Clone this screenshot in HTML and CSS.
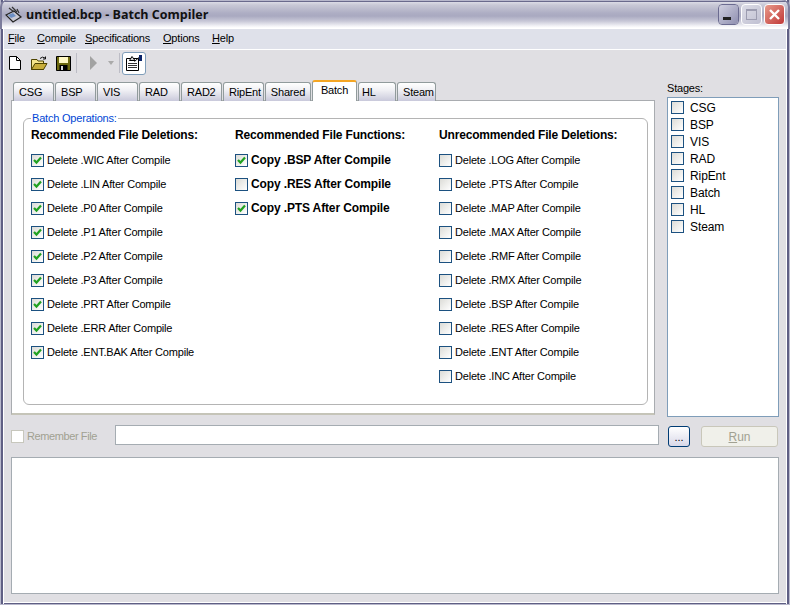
FILE: index.html
```html
<!DOCTYPE html>
<html lang="en">
<head>
  <meta charset="UTF-8">
  <title>untitled.bcp - Batch Compiler</title>
  <link rel="stylesheet" href="styles.css">
</head>
<body>
  <svg class="defs" width="0" height="0">
    <symbol id="check" viewBox="0 0 11 11">
      <path d="M2 5 L4.5 7.6 L9 2.6" fill="none" stroke="#21a121" stroke-width="2.2"/>
    </symbol>
  </svg>

  <div class="window">
    <header class="titlebar">
      <svg class="app-icon" width="18" height="18" viewBox="0 0 18 18">
        <path d="M1 9 L9 5 L16 11 L8 16 Z" fill="#c9c9d4" stroke="#222" stroke-width="1.2"/>
        <path d="M3 9 L8 7 L11 10 L6 12 Z" fill="#6d8fc4"/>
        <path d="M4 2 L9 6 M7 1 L12 6 M12 3 L14 7" stroke="#333" stroke-width="1.2" fill="none"/>
      </svg>
      <h1 class="title">untitled.bcp - Batch Compiler</h1>
      <div class="caption-buttons">
        <span class="cap-btn cap-min"><i></i></span>
        <span class="cap-btn cap-max"><i></i></span>
        <span class="cap-btn cap-close">
          <svg width="13" height="13" viewBox="0 0 13 13"><path d="M2 2 L11 11 M11 2 L2 11" stroke="#fff" stroke-width="2.4"/></svg>
        </span>
      </div>
    </header>

    <nav class="menubar">
      <a><u>F</u>ile</a>
      <a><u>C</u>ompile</a>
      <a><u>S</u>pecifications</a>
      <a><u>O</u>ptions</a>
      <a><u>H</u>elp</a>
    </nav>

    <div class="toolbar">
      <svg class="tool" width="12" height="14" viewBox="0 0 12 14">
        <path d="M0.5 0.5 H7.5 L11.5 4.5 V13.5 H0.5 Z" fill="#fff" stroke="#000"/>
        <path d="M7.5 0.5 V4.5 H11.5" fill="none" stroke="#000"/>
      </svg>
      <svg class="tool tool-open" width="17" height="14" viewBox="0 0 17 14">
        <path d="M0.5 3.5 H6 L7 5 H12.5 V13.5 H0.5 Z" fill="#f4e58c" stroke="#4d4300"/>
        <path d="M0.5 13.5 L4 7.5 H16 L12.5 13.5 Z" fill="#c8ae3c" stroke="#4d4300"/>
        <path d="M9 2.5 Q11.5 0 14 2 M14.5 0.5 V3 H12" fill="none" stroke="#111"/>
      </svg>
      <svg class="tool" width="15" height="15" viewBox="0 0 15 15">
        <path d="M0.5 0.5 H14.5 V14.5 H0.5 Z" fill="#6e6a10" stroke="#000"/>
        <rect x="3" y="1" width="9" height="6" fill="#fff8c4"/>
        <rect x="3.5" y="9" width="8" height="5.5" fill="#000"/>
        <rect x="5" y="10" width="2" height="4" fill="#d8d8d8"/>
      </svg>
      <span class="tool-sep"></span>
      <svg class="tool-play" width="7" height="14" viewBox="0 0 7 14"><path d="M0 0 L7 7 L0 14 Z" fill="#a2a2a2"/></svg>
      <svg class="tool-drop" width="6" height="4" viewBox="0 0 6 4"><path d="M0 0 H6 L3 4 Z" fill="#aaa"/></svg>
      <span class="tool-sep tool-sep-2"></span>
      <span class="tool-btn">
        <svg width="18" height="18" viewBox="0 0 18 18">
          <path d="M1.5 4.5 H13.5 V16.5 H1.5 Z" fill="#fff" stroke="#000"/>
          <path d="M4.5 6.5 L7 2.5 L10 6.5 Z" fill="#d8d8d8" stroke="#000"/>
          <path d="M3 9.5 H12 M3 11.5 H12 M3 13.5 H12" stroke="#333"/>
          <rect x="14" y="1" width="3" height="6" fill="#0a246a"/>
          <path d="M9.5 7.5 L14 3.5" stroke="#000"/>
        </svg>
      </span>
    </div>

    <main class="workspace">
      <div class="compile-pane">
        <div class="tabs">
          <span class="tab">CSG</span>
          <span class="tab">BSP</span>
          <span class="tab">VIS</span>
          <span class="tab">RAD</span>
          <span class="tab">RAD2</span>
          <span class="tab">RipEnt</span>
          <span class="tab tab-center">Shared</span>
          <span class="tab tab-center tab-active">Batch</span>
          <span class="tab tab-hl">HL</span>
          <span class="tab">Steam</span>
        </div>
        <section class="tab-page">
          <fieldset class="group">
            <legend>Batch Operations:</legend>
            <div class="group-cols">
              <div class="col">
                <h2>Recommended File Deletions:</h2>
                <label class="row"><span class="box"><svg><use href="#check"/></svg></span>Delete .WIC After Compile</label>
                <label class="row"><span class="box"><svg><use href="#check"/></svg></span>Delete .LIN After Compile</label>
                <label class="row"><span class="box"><svg><use href="#check"/></svg></span>Delete .P0 After Compile</label>
                <label class="row"><span class="box"><svg><use href="#check"/></svg></span>Delete .P1 After Compile</label>
                <label class="row"><span class="box"><svg><use href="#check"/></svg></span>Delete .P2 After Compile</label>
                <label class="row"><span class="box"><svg><use href="#check"/></svg></span>Delete .P3 After Compile</label>
                <label class="row"><span class="box"><svg><use href="#check"/></svg></span>Delete .PRT After Compile</label>
                <label class="row"><span class="box"><svg><use href="#check"/></svg></span>Delete .ERR After Compile</label>
                <label class="row"><span class="box"><svg><use href="#check"/></svg></span>Delete .ENT.BAK After Compile</label>
              </div>
              <div class="col col-bold">
                <h2>Recommended File Functions:</h2>
                <label class="row"><span class="box"><svg><use href="#check"/></svg></span>Copy .BSP After Compile</label>
                <label class="row"><span class="box"></span>Copy .RES After Compile</label>
                <label class="row"><span class="box"><svg><use href="#check"/></svg></span>Copy .PTS After Compile</label>
              </div>
              <div class="col">
                <h2>Unrecommended File Deletions:</h2>
                <label class="row"><span class="box"></span>Delete .LOG After Compile</label>
                <label class="row"><span class="box"></span>Delete .PTS After Compile</label>
                <label class="row"><span class="box"></span>Delete .MAP After Compile</label>
                <label class="row"><span class="box"></span>Delete .MAX After Compile</label>
                <label class="row"><span class="box"></span>Delete .RMF After Compile</label>
                <label class="row"><span class="box"></span>Delete .RMX After Compile</label>
                <label class="row"><span class="box"></span>Delete .BSP After Compile</label>
                <label class="row"><span class="box"></span>Delete .RES After Compile</label>
                <label class="row"><span class="box"></span>Delete .ENT After Compile</label>
                <label class="row"><span class="box"></span>Delete .INC After Compile</label>
              </div>
            </div>
          </fieldset>
        </section>
      </div>

      <aside class="stages">
        <div class="stages-label">Stages:</div>
        <ul class="stage-list">
          <li><span class="box"></span>CSG</li>
          <li><span class="box"></span>BSP</li>
          <li><span class="box"></span>VIS</li>
          <li><span class="box"></span>RAD</li>
          <li><span class="box"></span>RipEnt</li>
          <li><span class="box"></span>Batch</li>
          <li><span class="box"></span>HL</li>
          <li><span class="box"></span>Steam</li>
        </ul>
      </aside>
    </main>

    <div class="file-row">
      <label class="remember"><span class="box box-off"></span>Remember File</label>
      <input class="file-input" type="text">
      <button class="browse">...</button>
      <button class="run" disabled><u>R</u>un</button>
    </div>

    <textarea class="log"></textarea>
  </div>
</body>
</html>
```

FILE: styles.css
```css
html, body {
  margin: 0;
  padding: 0;
  height: 605px;
  overflow: hidden;
}

body {
  font-family: 'Liberation Sans', Arial, sans-serif;
  font-size: 11px;
  letter-spacing: -0.2px;
  color: #000;
  background-color: #e0dfe3;
}

.defs {
  display: block;
  height: 0;
}

.window {
  box-sizing: border-box;
  width: 790px;
  height: 605px;
  display: flex;
  flex-direction: column;
  background-color: #e0dfe3;
  border: 1px solid #b8b8cc;
  border-top: 0;
  box-shadow: inset 1px 0 #5f5f84, inset 2px 0 #5f5f84, inset 3px 0 #fff, inset -1px 0 #5f5f84, inset -2px 0 #5f5f84, inset -3px 0 #fff, inset 0 -1px #5f5f84, inset 0 -2px #fff;
}

/* title bar */
.titlebar {
  height: 29px;
  flex: none;
  margin: 0 -1px;
  display: flex;
  align-items: center;
  padding: 0 5px 0 5px;
  box-sizing: border-box;
  border-radius: 7px 7px 0 0;
  box-shadow: inset 2px 0 #7c7c9c, inset -2px 0 #7c7c9c;
  background: linear-gradient(#b8b8cc 0, #b8b8cc 1px, #6a6a8c 1px, #6a6a8c 2px, #dcdce6 2px, #c8c8d6 5px, #aeaec4 13px, #a9a9c0 16px, #c6c6d6 21px, #f2f2f6 26px, #fff 28px);
}

.app-icon {
  flex: none;
  margin-right: 3px;
}

.title {
  margin: 0;
  font-family: 'Open Sans', sans-serif;
  font-size: 12.5px;
  letter-spacing: 0;
  font-weight: 700;
  color: #111;
  flex: 1;
}

.caption-buttons {
  display: flex;
  gap: 2px;
}

.cap-btn {
  box-sizing: border-box;
  width: 21px;
  height: 21px;
  border: 1px solid #fff;
  border-radius: 4px;
  display: flex;
  align-items: center;
  justify-content: center;
}

.cap-min {
  background: linear-gradient(135deg, #d0d0e0, #8f8fb0);
  outline: 1px solid #6b6b90;
  outline-offset: -1px;
}

.cap-min i {
  width: 8px;
  height: 3px;
  background: #222;
  margin: 8px 4px 0 0;
}

.cap-max {
  background: linear-gradient(135deg, #dcdce6, #c0c0d2);
}

.cap-max i {
  box-sizing: border-box;
  width: 11px;
  height: 11px;
  border: 1px solid #9c9cb0;
  border-top-width: 2px;
}

.cap-close {
  background: linear-gradient(135deg, #e89a8a, #c03838);
}

/* menu + toolbar */
.menubar {
  box-sizing: border-box;
  flex: none;
  height: 21px;
  margin: 0 3px;
  padding: 0 0 2px 4px;
  display: grid;
  grid-template-columns: 29px 48px 78px 49px auto;
  align-items: center;
  background-color: #dfe1ea;
  border-bottom: 1px solid #fff;
}

.toolbar {
  flex: none;
  height: 26px;
  margin: 0 3px;
  padding-left: 5px;
  display: flex;
  align-items: center;
}

.tool {
  margin-right: 10px;
  flex: none;
}

.tool-open {
  margin-right: 8px;
}

.tool-sep {
  width: 1px;
  height: 20px;
  background-color: #bdbdc6;
  margin: 0 13px 0 -5px;
}

.tool-play {
  margin-right: 11px;
}

.tool-drop {
  margin-right: 5px;
}

.tool-sep-2 {
  margin: 0 2px 0 0;
}

.tool-btn {
  box-sizing: border-box;
  width: 24px;
  height: 23px;
  display: flex;
  align-items: center;
  justify-content: center;
  background-color: #fff;
  border: 1px solid #7f9db9;
  border-radius: 3px;
}

/* tabs */
.workspace {
  flex: none;
  height: 339px;
  margin: 1px 10px 0 10px;
  display: flex;
}

.compile-pane {
  width: 644px;
  margin-top: 3px;
  display: flex;
  flex-direction: column;
}

.tabs {
  height: 20px;
  padding-left: 2px;
  display: grid;
  grid-template-columns: repeat(6, 42px) 47px 46px 39px 40px;
  position: relative;
  z-index: 1;
}

.tab {
  box-sizing: border-box;
  margin: 2px 1px 0 0;
  height: 19px;
  padding: 3px 0 0 5px;
  border: 1px solid #919b9c;
  border-bottom: 0;
  border-radius: 3px 3px 0 0;
  background: linear-gradient(#fff, #f0f0f4 40%, #c9c9db);
}

.tab-center {
  padding-left: 0;
  text-align: center;
}

.tab-hl {
  padding-left: 3px;
}

.tab-active {
  height: 21px;
  margin-top: 0;
  padding-top: 2px;
  background: #fff;
  border-top: 2px solid #f5a623;
}

.tab-page {
  box-sizing: border-box;
  height: 315px;
  padding: 11px 6px 9px 11px;
  background-color: #fff;
  border: 1px solid #a9acb0;
  border-bottom: 2px solid #c5c4b8;
}

.group {
  box-sizing: border-box;
  height: 293px;
  margin: 0;
  padding: 0 7px;
  border: 1px solid #b4b4b4;
  border-radius: 6px;
  min-width: 0;
}

.group legend {
  color: #0046d5;
  padding: 0 1px;
  line-height: 13px;
}

.group-cols {
  display: grid;
  grid-template-columns: repeat(3, 204px);
}

.col h2 {
  margin: 3px 0 6px;
  font-size: 12px;
  line-height: 14px;
  font-weight: 700;
  letter-spacing: -0.17px;
  white-space: nowrap;
}

.row {
  display: flex;
  align-items: center;
  height: 24px;
  white-space: nowrap;
}

.col-bold .row {
  font-size: 12px;
  font-weight: 700;
  letter-spacing: -0.13px;
}

.box {
  box-sizing: border-box;
  flex: none;
  width: 13px;
  height: 13px;
  margin-right: 3px;
  border: 1px solid #1c5180;
  background: linear-gradient(135deg, #dcdcd7, #fff);
  display: inline-flex;
}

.box svg {
  width: 11px;
  height: 11px;
}

/* stages list */
.stages {
  width: 112px;
  margin-left: 12px;
}

.stages-label {
  height: 18px;
  line-height: 18px;
  margin-top: 2px;
}

.stage-list {
  box-sizing: border-box;
  height: 320px;
  margin: 0;
  padding: 1px 3px;
  list-style: none;
  background-color: #fff;
  border: 1px solid #7f9db9;
}

.stage-list li {
  height: 17px;
  display: flex;
  align-items: center;
  font-size: 12px;
  letter-spacing: -0.1px;
}

.stage-list .box {
  margin-right: 6px;
}

/* bottom row */
.file-row {
  flex: none;
  height: 23px;
  margin: 8px 10px 0 10px;
  display: flex;
  align-items: flex-start;
}

.remember {
  width: 104px;
  height: 20px;
  margin-top: 2px;
  color: #a1a192;
  letter-spacing: -0.4px;
  display: flex;
  align-items: center;
}

.box-off {
  border-color: #c7c7bd;
  background: #fff;
}

.file-input {
  box-sizing: border-box;
  width: 544px;
  height: 20px;
  margin: 1px 9px 0 0;
  border: 1px solid #a5acb2;
  background-color: #fff;
}

.browse {
  box-sizing: border-box;
  width: 22px;
  height: 21px;
  padding: 0;
  margin: 2px 11px 0 0;
  font: inherit;
  border: 1px solid #003c74;
  border-radius: 3px;
  background: linear-gradient(#fff, #d8d8e8);
}

.run {
  box-sizing: border-box;
  width: 77px;
  height: 21px;
  padding: 0;
  margin-top: 2px;
  font-size: 12px;
  font-family: inherit;
  color: #a1a192;
  border: 1px solid #c9c7ba;
  border-radius: 3px;
  background-color: #f0f0ea;
}

.log {
  box-sizing: border-box;
  display: block;
  flex: none;
  width: 768px;
  height: 137px;
  margin: 10px 10px 0 10px;
  padding: 0;
  resize: none;
  border: 1px solid #a5acb2;
  background-color: #fff;
}
```
